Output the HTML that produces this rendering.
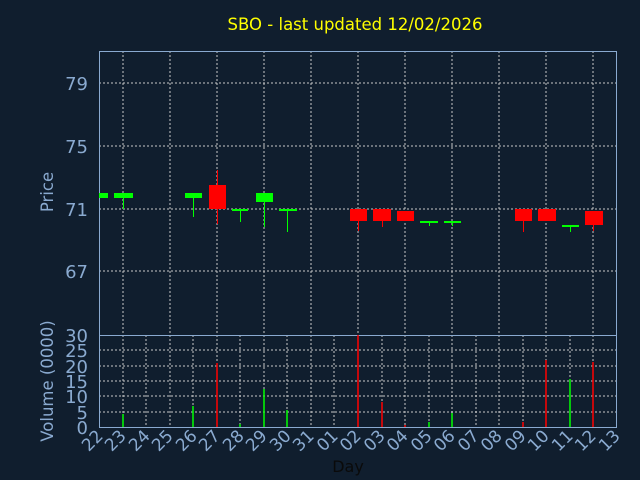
<!DOCTYPE html><html><head><style>body{margin:0;background:#101e2e}svg{display:block}</style></head><body>
<svg width="640" height="480" xmlns="http://www.w3.org/2000/svg" font-family="DejaVu Sans, Liberation Sans, sans-serif">
<rect width="640" height="480" fill="#101e2e"/>
<text x="355" y="30" fill="#ffff00" font-size="16.5" text-anchor="middle">SBO - last updated 12/02/2026</text>
<g stroke="#c8c8c8" stroke-width="1" stroke-dasharray="2,2" fill="none">
<path d="M99 83H617M99 146H617M99 209H617M99 271H617"/>
<path d="M123 51V335M170 51V335M217 51V335M264 51V335M311 51V335M358 51V335M405 51V335M452 51V335M499 51V335M546 51V335M593 51V335"/>
<path d="M99 350H617M99 366H617M99 381H617M99 396H617M99 412H617"/>
<path d="M123 335V427M146 335V427M170 335V427M193 335V427M217 335V427M240 335V427M264 335V427M287 335V427M311 335V427M334 335V427M358 335V427M382 335V427M405 335V427M429 335V427M452 335V427M476 335V427M499 335V427M523 335V427M546 335V427M570 335V427M593 335V427"/>
</g>
<g stroke="#8aaad0" fill="none">
<rect x="99.5" y="51.5" width="517" height="376"/>
<path d="M99 335.5H617"/>
</g>
<g fill="#8aaad0" font-size="18" text-anchor="end">
<text x="88" y="90">79</text><text x="88" y="153">75</text><text x="88" y="216">71</text><text x="88" y="278">67</text>
<text x="88" y="342">30</text><text x="88" y="357">25</text><text x="88" y="373">20</text><text x="88" y="388">15</text><text x="88" y="403">10</text><text x="88" y="419">5</text><text x="88" y="434">0</text>
</g>
<text transform="translate(53,192) rotate(-90)" fill="#8aaad0" font-size="16.5" text-anchor="middle">Price</text>
<text transform="translate(53,381) rotate(-90)" fill="#8aaad0" font-size="16.5" text-anchor="middle">Volume (0000)</text>
<g fill="#8aaad0" font-size="17" text-anchor="end">
<text transform="translate(104,437) rotate(-45)">22</text><text transform="translate(127,437) rotate(-45)">23</text><text transform="translate(151,437) rotate(-45)">24</text><text transform="translate(174,437) rotate(-45)">25</text><text transform="translate(198,437) rotate(-45)">26</text><text transform="translate(221,437) rotate(-45)">27</text><text transform="translate(245,437) rotate(-45)">28</text><text transform="translate(268,437) rotate(-45)">29</text><text transform="translate(292,437) rotate(-45)">30</text><text transform="translate(315,437) rotate(-45)">31</text><text transform="translate(339,437) rotate(-45)">01</text><text transform="translate(362,437) rotate(-45)">02</text><text transform="translate(386,437) rotate(-45)">03</text><text transform="translate(409,437) rotate(-45)">04</text><text transform="translate(433,437) rotate(-45)">05</text><text transform="translate(456,437) rotate(-45)">06</text><text transform="translate(480,437) rotate(-45)">07</text><text transform="translate(503,437) rotate(-45)">08</text><text transform="translate(527,437) rotate(-45)">09</text><text transform="translate(550,437) rotate(-45)">10</text><text transform="translate(574,437) rotate(-45)">11</text><text transform="translate(597,437) rotate(-45)">12</text><text transform="translate(621,437) rotate(-45)">13</text>
</g>
<text x="348" y="472" fill="#0a0a0a" font-size="16" text-anchor="middle">Day</text>
<g stroke-width="1">
<path stroke="#00ff00" d="M123.5 197V209M193.5 197V217M240.5 211V222M264.5 202V227M287.5 211V232M429.5 223V226M452.5 223V226M570.5 227V232"/>
<path stroke="#ff0000" d="M217.5 170V224M358.5 221V231M382.5 221V227M523.5 221V232M593.5 225V231"/>
</g>
<g fill="#00ff00">
<rect x="99" y="193" width="9" height="5"/><rect x="114" y="193" width="19" height="5"/><rect x="185" y="193" width="17" height="5"/><rect x="232" y="209" width="16" height="2"/><rect x="256" y="193" width="17" height="9"/><rect x="279" y="209" width="18" height="2"/><rect x="420" y="221" width="18" height="2"/><rect x="444" y="221" width="17" height="2"/><rect x="562" y="225" width="17" height="2"/>
</g>
<g fill="#ff0000">
<rect x="209" y="185" width="17" height="24"/><rect x="350" y="209" width="17" height="12"/><rect x="373" y="209" width="18" height="12"/><rect x="397" y="211" width="17" height="10"/><rect x="515" y="209" width="17" height="12"/><rect x="538" y="209" width="18" height="12"/><rect x="585" y="211" width="18" height="14"/>
</g>
<g stroke-width="1.5">
<path stroke="#00ff00" d="M123 427V414M193 427V406M240 427V424M264 427V389M287 427V410M429 427V422M452 427V413M570 427V379"/>
<path stroke="#ff0000" d="M217 427V363M358 427V335M382 427V402M405 427V425M523 427V422M546 427V360M593 427V362"/>
</g>
</svg>
</body></html>
